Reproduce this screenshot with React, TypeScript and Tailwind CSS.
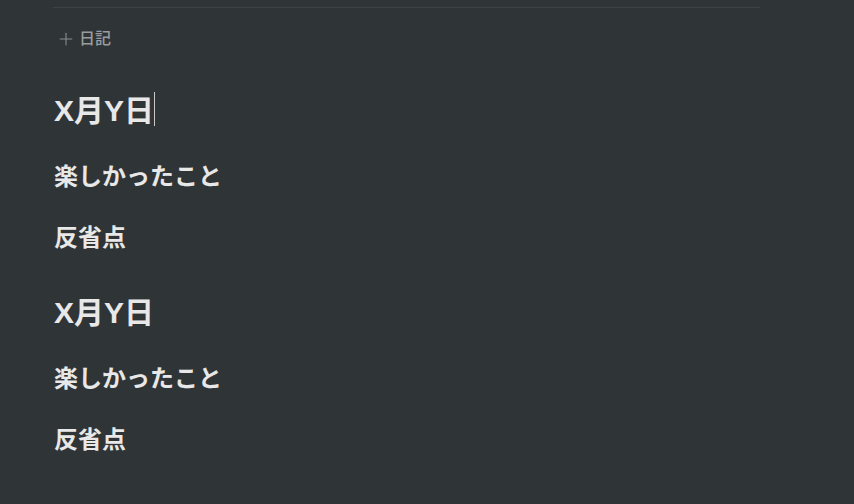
import { Plus } from "lucide-react";

const font = {
  fontFamily: '"Liberation Sans", "Noto Sans CJK JP", sans-serif',
};

function Entry({ first }: { first?: boolean }) {
  return (
    <div className="flex flex-col">
      <h1 className="mt-[40px] flex h-[39px] items-center text-[30px] font-bold leading-[39px] text-[#e8e8e8]">
        <span>X月Y日</span>
        {first ? <span className="h-[34px] w-px -translate-y-[2px] bg-[#c8c8c8]" /> : null}
      </h1>
      <h2 className="mt-[31px] h-[31px] text-[24px] font-bold leading-[31px] text-[#e8e8e8]">
        楽しかったこと
      </h2>
      <h2 className="mt-[30px] h-[31px] text-[24px] font-bold leading-[31px] text-[#e8e8e8]">
        反省点
      </h2>
    </div>
  );
}

export default function App() {
  return (
    <div className="h-[504px] w-[854px] overflow-hidden bg-[#2f3437]" style={font}>
      <div className="ml-[53px] w-[707px] pt-[7px]">
        <div className="h-px bg-[#3d4245]" />
        <div className="mt-[19px] flex h-6 items-center gap-[3px] pl-[3px] text-[16px] font-medium text-[#9a9c9e]">
          <Plus className="size-[20px] text-[#8a8d90]" strokeWidth={1.3} />
          <span>日記</span>
        </div>
        <div className="pl-px">
          <Entry first />
          <Entry />
        </div>
      </div>
    </div>
  );
}
